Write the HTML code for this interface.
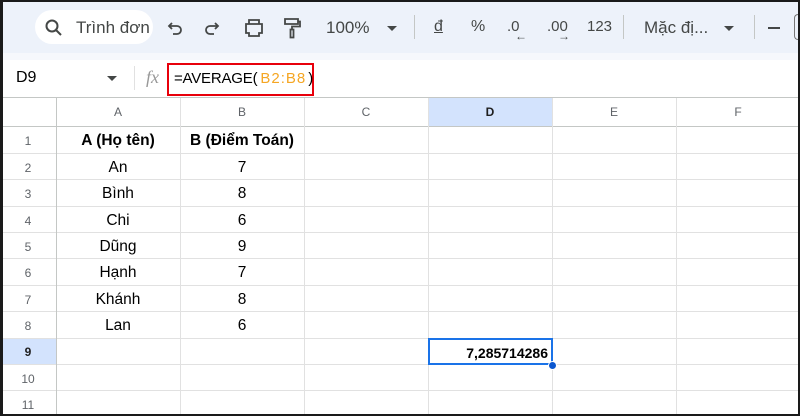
<!DOCTYPE html>
<html><head><meta charset="utf-8"><style>
*{margin:0;padding:0;box-sizing:border-box}
body{width:800px;height:416px;overflow:hidden;background:#fff;font-family:"Liberation Sans",Arial,sans-serif;position:relative}
.a{position:absolute}
.tb{left:0;top:0;width:800px;height:53px;background:#edf2fa}
.t{position:absolute;font-size:17px;color:#444746;top:18px}
.vl{position:absolute;width:1px;background:#c4c7c5}
.h{position:absolute;height:1px;background:#e1e1e1;left:0;width:800px}
.v{position:absolute;width:1px;background:#e1e1e1;top:98px;height:318px}
.c{position:absolute;font-size:15.5px;color:#000;text-align:center;width:124px;height:26px;line-height:28px}
.rn{position:absolute;left:0;width:56px;text-align:center;font-size:12px;color:#5f6368;height:26px;line-height:28px}
.ch{position:absolute;top:98px;height:28px;line-height:29px;width:124px;text-align:center;font-size:12px;color:#5f6368}
</style></head><body>
<div class="a tb"></div>
<div class="a" style="left:0;top:53px;width:800px;height:7px;background:#f6f8fc"></div>
<div class="a" style="left:35px;top:10px;width:118px;height:34px;background:#fff;border-radius:17px"></div>
<svg class="a" style="left:44px;top:18px" width="20" height="20" viewBox="0 0 20 20"><circle cx="8" cy="8" r="5.5" fill="none" stroke="#444746" stroke-width="2"/><path d="M12 12l5 5" stroke="#444746" stroke-width="2"/></svg>
<div class="t" style="left:76px;font-size:17px">Trình đơn</div>
<div class="a" style="left:153px;top:10px;width:8px;height:34px;background:#edf2fa"></div>
<svg class="a" style="left:166px;top:19px" width="18" height="18" viewBox="0 0 18 18"><path d="M6 4L3 7l3 3M3 7h8a4 4 0 010 8H7" fill="none" stroke="#444746" stroke-width="1.8"/></svg>
<svg class="a" style="left:203px;top:19px" width="18" height="18" viewBox="0 0 18 18"><path d="M12 4l3 3-3 3M15 7H7a4 4 0 000 8h4" fill="none" stroke="#444746" stroke-width="1.8"/></svg>
<svg class="a" style="left:243px;top:18px" width="22" height="20" viewBox="0 0 22 20"><path d="M6 2h10v4H6zM3 6h16v9h-3v3H6v-3H3z" fill="none" stroke="#444746" stroke-width="1.8"/></svg>
<svg class="a" style="left:283px;top:17px" width="20" height="22" viewBox="0 0 20 22"><path d="M2 2h13v5H2zM15 4.5h2v5H9v3M7.5 12.5h3v8h-3z" fill="none" stroke="#444746" stroke-width="1.8"/></svg>
<div class="t" style="left:326px">100%</div>
<div class="a" style="left:387px;top:26px;border:5px solid transparent;border-top:5px solid #444746;border-bottom:0"></div>
<div class="vl" style="left:414px;top:15px;height:24px"></div>
<div class="t" style="left:434px;text-decoration:underline;font-size:16px">đ</div>
<div class="t" style="left:471px;font-size:16px">%</div>
<div class="t" style="left:507px;font-size:15px">.0</div><div class="t" style="left:515px;top:29px;font-size:12px">←</div>
<div class="t" style="left:547px;font-size:15px">.00</div><div class="t" style="left:558px;top:29px;font-size:12px">→</div>
<div class="t" style="left:587px;font-size:15px">123</div>
<div class="vl" style="left:623px;top:15px;height:24px"></div>
<div class="t" style="left:644px">Mặc đị...</div>
<div class="a" style="left:724px;top:26px;border:5px solid transparent;border-top:5px solid #444746;border-bottom:0"></div>
<div class="vl" style="left:754px;top:15px;height:24px"></div>
<div class="a" style="left:768px;top:27px;width:12px;height:2px;background:#444746"></div>
<div class="a" style="left:794px;top:14px;width:6px;height:26px;border:1px solid #777;border-right:0;border-radius:4px 0 0 4px"></div>

<div class="a" style="left:16px;top:69px;font-size:16px;color:#000">D9</div>
<div class="a" style="left:107px;top:76px;border:5px solid transparent;border-top:5px solid #444746;border-bottom:0"></div>
<div class="vl" style="left:134px;top:66px;height:24px;background:#e1e1e1"></div>
<div class="a" style="left:146px;top:67px;font-size:18px;font-style:italic;color:#999;font-family:'Liberation Serif',serif">fx</div>
<div class="a" style="left:167px;top:63px;width:147px;height:33px;border:2px solid #e8000b"></div>
<div class="a" style="left:174px;top:70px;font-size:15px;color:#000;letter-spacing:-0.2px">=AVERAGE(<span style="color:#f5a623;letter-spacing:1px;margin-left:3px">B2:B8</span><span style="margin-left:2px">)</span></div>

<div class="a" style="left:0;top:97px;width:800px;height:1px;background:#c4c7c5"></div>
<div class="a" style="left:428px;top:98px;width:124px;height:28px;background:#d3e3fd"></div>
<div class="a" style="left:0;top:338px;width:56px;height:26px;background:#d3e3fd"></div>
<div class="h" style="top:126px;background:#c4c7c5"></div>
<div class="h" style="top:153px"></div><div class="h" style="top:179px"></div><div class="h" style="top:206px"></div><div class="h" style="top:232px"></div><div class="h" style="top:258px"></div><div class="h" style="top:285px"></div><div class="h" style="top:311px"></div><div class="h" style="top:338px"></div><div class="h" style="top:364px"></div><div class="h" style="top:390px"></div>
<div class="v" style="left:56px;background:#c4c7c5"></div><div class="v" style="left:180px"></div><div class="v" style="left:304px"></div><div class="v" style="left:428px"></div><div class="v" style="left:552px"></div><div class="v" style="left:676px"></div>

<div class="ch" style="left:56px">A</div><div class="ch" style="left:180px">B</div><div class="ch" style="left:304px">C</div><div class="ch" style="left:428px;font-weight:bold;color:#1f1f1f">D</div><div class="ch" style="left:552px">E</div><div class="ch" style="left:676px">F</div>

<div class="rn" style="top:127px">1</div><div class="rn" style="top:154px">2</div><div class="rn" style="top:180px">3</div><div class="rn" style="top:207px">4</div><div class="rn" style="top:233px">5</div><div class="rn" style="top:259px">6</div><div class="rn" style="top:286px">7</div><div class="rn" style="top:312px">8</div><div class="rn" style="top:338px;font-weight:bold;color:#1f1f1f">9</div><div class="rn" style="top:365px">10</div><div class="rn" style="top:391px">11</div>

<div class="c" style="left:56px;top:127px;font-weight:bold">A (Họ tên)</div><div class="c" style="left:180px;top:127px;font-weight:bold">B (Điểm Toán)</div>
<div class="c" style="left:56px;top:154px">An</div><div class="c" style="left:180px;top:154px">7</div>
<div class="c" style="left:56px;top:180px">Bình</div><div class="c" style="left:180px;top:180px">8</div>
<div class="c" style="left:56px;top:207px">Chi</div><div class="c" style="left:180px;top:207px">6</div>
<div class="c" style="left:56px;top:233px">Dũng</div><div class="c" style="left:180px;top:233px">9</div>
<div class="c" style="left:56px;top:259px">Hạnh</div><div class="c" style="left:180px;top:259px">7</div>
<div class="c" style="left:56px;top:286px">Khánh</div><div class="c" style="left:180px;top:286px">8</div>
<div class="c" style="left:56px;top:312px">Lan</div><div class="c" style="left:180px;top:312px">6</div>

<div class="a" style="left:428px;top:338px;width:125px;height:27px;border:2px solid #1a73e8"></div>
<div class="a" style="left:430px;top:339px;width:118px;text-align:right;font-size:14px;font-weight:bold;line-height:28px">7,285714286</div>
<div class="a" style="left:548px;top:361px;width:9px;height:9px;border-radius:50%;background:#0b57d0;border:1px solid #fff"></div>

<div class="a" style="left:0;top:0;width:800px;height:416px;border:2px solid #1a1a1a;border-left-width:3px"></div>
</body></html>
